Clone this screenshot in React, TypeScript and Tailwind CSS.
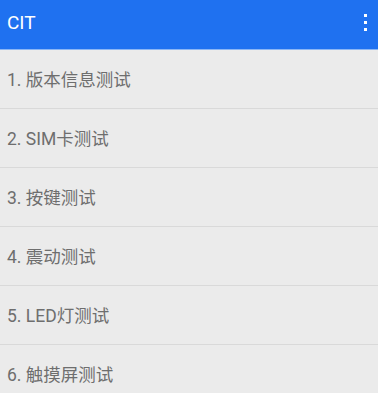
const items = [
  '1. 版本信息测试',
  '2. SIM卡测试',
  '3. 按键测试',
  '4. 震动测试',
  '5. LED灯测试',
  '6. 触摸屏测试',
];

export default function App() {
  return (
    <div
      className="w-[378px] h-[393px] overflow-hidden bg-[#ebebeb]"
      style={{ fontFamily: 'Roboto, "Noto Sans CJK SC", sans-serif' }}
    >
      {/* Toolbar */}
      <div className="h-[50px] bg-[#1f71f0] border-b border-[#8bb6f5] flex items-center justify-between pl-[7px] pr-[11px]">
        <span className="text-white text-[19px] pb-[2px]">CIT</span>
        <div className="flex flex-col gap-[4px] pb-[4px]">
          <span className="block w-[3px] h-[3px] bg-white" />
          <span className="block w-[3px] h-[3px] bg-white" />
          <span className="block w-[3px] h-[3px] bg-white" />
        </div>
      </div>

      {/* Test list */}
      <div className="flex flex-col">
        {items.map((label) => (
          <div
            key={label}
            className="h-[59px] shrink-0 flex items-center pl-[7px] pt-[2px] border-b border-[#d9d9d9] text-[17.5px] text-[#6e6e6e]"
          >
            {label}
          </div>
        ))}
      </div>
    </div>
  );
}
